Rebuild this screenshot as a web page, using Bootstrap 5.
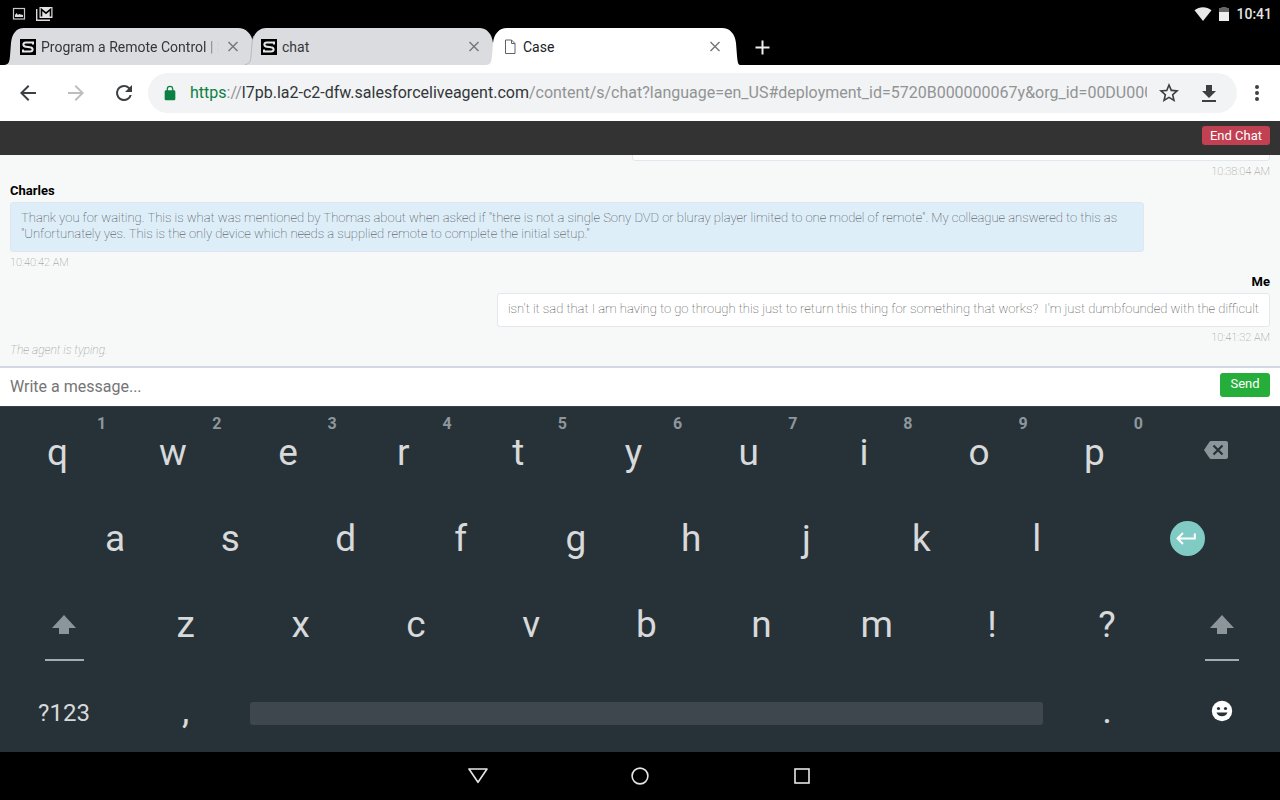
<!DOCTYPE html>
<html lang="en">
<head>
<meta charset="utf-8">
<meta name="viewport" content="width=device-width, initial-scale=1">
<title>Case</title>
<link href="https://cdn.jsdelivr.net/npm/bootstrap@5.3.0/dist/css/bootstrap.min.css" rel="stylesheet">
<style>
body{font-family:Roboto,"Liberation Sans",sans-serif;background:#f7f9f8;height:100vh;min-height:640px}
svg{display:block;flex:none}
button{font-family:inherit}
.plain{background:none;border:0;padding:0;color:inherit}
.status-bar{height:28px;padding:0 8px 0 12px;color:#e4e4e4;font-size:14px;line-height:26px}
.tab-strip{height:37px;padding-left:10px}
.tab-item{width:241px;height:37px;padding:0 12px 0 10px;color:#35363a;font-size:14px;line-height:38px;min-width:0}
.tab-item.active{z-index:1;color:#202124}
.tab-item a{color:inherit}
.tab-shape{position:absolute;left:-6px;top:0;z-index:0}
.tab-body{z-index:1}
.tab-title{margin-left:5px;white-space:nowrap}
.fade-end{-webkit-mask-image:linear-gradient(to right,#000 92%,transparent);mask-image:linear-gradient(to right,#000 92%,transparent)}
.toolbar{height:56px;padding:0 11px 0 16px;color:#3c4043}
.nav-buttons{gap:24px;margin-right:12px}
.address{height:40px;background:#f1f3f4;border-radius:20px;padding:0 16px 0 14px;min-width:0}
.address-text{font-size:16px;color:#919395;margin:0 10px 0 12px}
.address-text .scheme{color:#0b8043}
.address-text .host{color:#333638}
.chat-head{height:34px;background:#333;padding:5px 10px}
.btn-end{height:19px;padding:0 8px;font-size:13px;line-height:17px;color:#fff;background:#c14152;border:0;border-radius:3px}
.chat-log{padding:0 10px 10px;font-size:13px;min-height:0}
.who{font-weight:700;line-height:16px;color:#000}
.bubble{max-width:90%;padding:7px 10px 9px;margin-top:3px;min-height:34px;border:1px solid #e2e8ee;border-radius:3px;background:#fff;line-height:16px;font-weight:100;color:#333;white-space:pre-wrap}
.bubble.agent{background:#deeef9;border-color:#dfe6f1}
.bubble.earlier{width:638px}
.stamp{font-size:11px;line-height:12px;margin:5px 0;font-weight:100;color:#888}
.typing{font-size:12px;line-height:12px;font-weight:100;font-style:italic;color:#888}
.composer{height:40px;border-top:2px solid #d2d7e1;padding:0 10px;background:#fff}
.composer input{font-size:16px;line-height:24px;color:#333;outline:0;min-width:0}
.composer input::placeholder{color:#757575;opacity:1}
.btn-send{height:24px;width:50px;margin-top:5px;padding:0 0 2px;font-size:13px;line-height:20px;color:#fff;background:#26ae3b;border:0;border-radius:3px}
.keyboard{background:#273238;color:#d7d9da;height:346px;border-top:1px solid #35434a}
.key-row{flex:1 1 0;min-height:0}
.cell{flex:0 0 9%;position:relative;display:flex;align-items:center;justify-content:center;font-size:37px;line-height:42px;padding-top:5px}
.cell-wide{flex-basis:10%}
.cell-indent{margin-left:4.5%}
.cell-enter{flex-basis:14.5%}
.cell-delete{padding-top:0}
.cell-fill{flex:1 1 0;min-width:0;padding:10px 7px 0}
.cell-label{font-size:24px;padding-top:8px}
.hint{position:absolute;top:7px;right:9px;font-size:16px;line-height:20px;font-weight:700;color:#8d979c}
.dim{color:#8b959a}
.rule{position:absolute;bottom:5px;height:2px;width:39px;background:#a3acb0}
.rule.short{width:34px}
.space-bar{height:23px;background:#3d474d;border-radius:3px}
.nav-bar{height:48px;gap:142px}
</style>
</head>
<body class="d-flex flex-column overflow-hidden">
<header class="bg-black flex-shrink-0">
  <div class="status-bar d-flex align-items-center justify-content-between">
    <div class="d-flex align-items-center gap-2">
      <svg width="14" height="14" viewBox="0 0 14 14"><rect x="1.5" y="1.5" width="11" height="10.500" fill="none" stroke="#c8c8c8" stroke-width="1.200"/><path d="M3 10V8l1.500-2L6 8l1-1 4 1v2z" fill="#ddd"/></svg>
      <svg width="20" height="16" viewBox="0 0 20 16"><path d="M2.700 3v11.300H16" fill="none" stroke="#ddd" stroke-width="1.400"/><path d="M5.500 1h13v11h-13z" fill="#e4e4e4"/><path d="M7.500 10.500V3.500L12 7.200l4.500-3.700v7" fill="none" stroke="#000" stroke-width="1.600"/></svg>
    </div>
    <div class="d-flex align-items-center">
      <svg width="18" height="16" viewBox="0 0 18 16"><path d="M9 15 .500 4.200C5.500.200 12.500.200 17.500 4.200z" fill="#e8e8e8"/></svg>
      <svg class="ms-1 me-1" width="16" height="16" viewBox="0 0 16 16"><path d="M5.500 1h5v1H13v4H3V2h2.500z" fill="#666"/><path d="M3 6h10v9H3z" fill="#eee"/></svg>
      <span class="fw-medium">10:41</span>
    </div>
  </div>
  <nav class="tab-strip d-flex" aria-label="Tabs">
    <div class="tab-item position-relative flex-shrink-1">
      <svg class="tab-shape" width="254" height="37" viewBox="0 0 254 37"><path d="M0 37C5 37 5.500 33 6 28L7 15C8 6 12 0 20 0H234C242 0 248 6 249 15L250 28C250 33 251 37 254 37z" fill="#dbdce0"/></svg>
      <div class="tab-body position-relative d-flex align-items-center h-100">
        <svg width="16" height="16" viewBox="0 0 16 16"><rect width="16" height="16"/><path d="M13 5.500V3.500H6C2.500 3.500 2.500 7.500 6 7.700l4 .500c3.500.300 3.500 4.300 0 4.300H3v-2" fill="none" stroke="#e8e8e8" stroke-width="2"/></svg>
        <a href="#" class="tab-title fade-end flex-grow-1 overflow-hidden text-decoration-none">Program a Remote Control | Sony</a>
        <button class="plain ms-2" aria-label="Close tab"><svg width="12" height="12" viewBox="0 0 12 12"><path d="m1.500 1 9 9m0-9-9 9" stroke="#77787c" stroke-width="1.500"/></svg></button>
      </div>
    </div>
    <div class="tab-item position-relative flex-shrink-1">
      <svg class="tab-shape" width="254" height="37" viewBox="0 0 254 37"><path d="M0 37C5 37 5.500 33 6 28L7 15C8 6 14 0 21 0H234C242 0 247 6 248 15L249 28C249 33 250 37 254 37z" fill="#dbdce0"/><path d="M0 36.500C5 36 5.500 33 6 28L7 15C7.500 12 8 10 9 8" fill="none" stroke="#b9babd"/></svg>
      <div class="tab-body position-relative d-flex align-items-center h-100">
        <svg width="16" height="16" viewBox="0 0 16 16"><rect width="16" height="16"/><path d="M13 5.500V3.500H6C2.500 3.500 2.500 7.500 6 7.700l4 .500c3.500.300 3.500 4.300 0 4.300H3v-2" fill="none" stroke="#e8e8e8" stroke-width="2"/></svg>
        <a href="#" class="tab-title flex-grow-1 overflow-hidden text-decoration-none">chat</a>
        <button class="plain ms-2" aria-label="Close tab"><svg width="12" height="12" viewBox="0 0 12 12"><path d="m1.500 1 9 9m0-9-9 9" stroke="#77787c" stroke-width="1.500"/></svg></button>
      </div>
    </div>
    <div class="tab-item active position-relative flex-shrink-1">
      <svg class="tab-shape" width="254" height="37" viewBox="0 0 254 37"><path d="M0 37C5 37 5.500 33 6 28L7 15C8 6 13 0 21 0H236C244 0 249 6 250 15L251 28C251.500 33 252 37 254 37z" fill="#fff"/></svg>
      <div class="tab-body position-relative d-flex align-items-center h-100">
        <svg width="16" height="16" viewBox="0 0 16 16"><path d="M3.500 1h6l3.500 3.500V14.500H3.500zM9.500 1v3.500H13" fill="none" stroke="#5f6368"/></svg>
        <a href="#" class="tab-title flex-grow-1 overflow-hidden text-decoration-none">Case</a>
        <button class="plain ms-2" aria-label="Close tab"><svg width="12" height="12" viewBox="0 0 12 12"><path d="m1.500 1 9 9m0-9-9 9" stroke="#77787c" stroke-width="1.500"/></svg></button>
      </div>
    </div>
    <button class="plain ms-3 ps-1" aria-label="New tab"><svg width="18" height="18" viewBox="0 0 18 18"><path d="M9.500 2.500v14M2.500 9.500h14" stroke="#eee" stroke-width="2"/></svg></button>
  </nav>
</header>

<div class="toolbar d-flex align-items-center bg-white flex-shrink-0">
  <div class="nav-buttons d-flex">
    <button class="plain" aria-label="Back"><svg width="24" height="24" viewBox="0 0 24 24"><path fill="#3c4043" d="M20 11H7.830l5.590-5.590L12 4l-8 8 8 8 1.410-1.410L7.830 13H20z"/></svg></button>
    <button class="plain" aria-label="Forward"><svg width="24" height="24" viewBox="0 0 24 24"><path fill="#bdbebf" d="m12 4-1.410 1.410L16.170 11H4v2h12.170l-5.580 5.590L12 20l8-8z"/></svg></button>
    <button class="plain" aria-label="Reload"><svg width="24" height="24" viewBox="0 0 24 24"><path fill="#3c4043" d="M17.650 6.350A7.960 7.960 0 0 0 12 4a8 8 0 1 0 7.730 10h-2.080A6 6 0 1 1 12 6c1.660 0 3.140.690 4.220 1.780L13 11h7V4z"/></svg></button>
  </div>
  <div class="address d-flex align-items-center flex-grow-1">
    <svg width="16" height="16" viewBox="0 0 24 24"><path fill="#0b8043" d="M18 8h-1V6A5 5 0 0 0 7 6v2H6a2 2 0 0 0-2 2v11a2 2 0 0 0 2 2h12a2 2 0 0 0 2-2V10a2 2 0 0 0-2-2zM8.900 8V6a3.100 3.100 0 0 1 6.200 0v2z"/></svg>
    <div class="address-text flex-grow-1 overflow-hidden text-nowrap" role="textbox" aria-label="Address" tabindex="0"><span class="scheme">https</span>://<span class="host">l7pb.la2-c2-dfw.salesforceliveagent.com</span>/content/s/chat?language=en_US#deployment_id=5720B000000067y&amp;org_id=00DU000</div>
    <button class="plain me-3" aria-label="Bookmark"><svg width="24" height="24" viewBox="0 0 24 24"><path fill="#3c4043" d="m22 9.240-7.190-.620L12 2 9.190 8.630 2 9.240l5.460 4.730L5.820 21 12 17.270 18.180 21l-1.630-7.030zM12 15.400l-3.760 2.270 1-4.280-3.320-2.880 4.380-.380L12 6.100l1.710 4.040 4.380.380-3.320 2.880 1 4.280z"/></svg></button>
    <button class="plain" aria-label="Download"><svg width="24" height="24" viewBox="0 0 24 24"><path fill="#3c4043" d="M19 10h-4V4H9v6H5l7 7zM5 19v2h14v-2z"/></svg></button>
  </div>
  <button class="plain ms-2" aria-label="Menu"><svg width="24" height="24" viewBox="0 0 24 24"><path fill="#3c4043" d="M12 8a2 2 0 1 0 0-4 2 2 0 0 0 0 4m0 2a2 2 0 1 0 0 4 2 2 0 0 0 0-4m0 6a2 2 0 1 0 0 4 2 2 0 0 0 0-4"/></svg></button>
</div>

<div class="chat-head d-flex justify-content-end align-items-start flex-shrink-0"><button class="btn-end">End Chat</button></div>

<main class="chat-log d-flex flex-column justify-content-end flex-grow-1 overflow-hidden">
  <div class="d-flex flex-column align-items-end flex-shrink-0">
    <div class="bubble earlier"></div>
    <div class="stamp">10:38:04 AM</div>
  </div>
  <div class="d-flex flex-column align-items-start flex-shrink-0">
    <div class="who">Charles</div>
    <div class="bubble agent">Thank you for waiting. This is what was mentioned by Thomas about when asked if "there is not a single Sony DVD or bluray player limited to one model of remote". My colleague answered to this as "Unfortunately yes. This is the only device which needs a supplied remote to complete the initial setup."</div>
    <div class="stamp">10:40:42 AM</div>
  </div>
  <div class="d-flex flex-column align-items-end flex-shrink-0">
    <div class="who">Me</div>
    <div class="bubble">isn't it sad that I am having to go through this just to return this thing for something that works?  I'm just dumbfounded with the difficult</div>
    <div class="stamp mb-0">10:41:32 AM</div>
  </div>
  <div class="typing flex-shrink-0">The agent is typing.</div>
</main>

<form class="composer d-flex align-items-start flex-shrink-0" onsubmit="return false">
  <input aria-label="Message" class="flex-grow-1 border-0 bg-transparent p-0 align-self-center" type="text" placeholder="Write a message...">
  <button class="btn-send">Send</button>
</form>

<section class="keyboard d-flex flex-column flex-shrink-0" aria-label="Keyboard">
  <div class="key-row d-flex">
    <button class="plain cell">q<span class="hint">1</span></button>
    <button class="plain cell">w<span class="hint">2</span></button>
    <button class="plain cell">e<span class="hint">3</span></button>
    <button class="plain cell">r<span class="hint">4</span></button>
    <button class="plain cell">t<span class="hint">5</span></button>
    <button class="plain cell">y<span class="hint">6</span></button>
    <button class="plain cell">u<span class="hint">7</span></button>
    <button class="plain cell">i<span class="hint">8</span></button>
    <button class="plain cell">o<span class="hint">9</span></button>
    <button class="plain cell">p<span class="hint">0</span></button>
    <button class="plain cell cell-wide cell-delete dim" aria-label="Backspace"><svg width="24" height="24" viewBox="0 0 24 24"><path fill="currentColor" d="M22 3H7c-.690 0-1.230.350-1.590.880L0 12l5.410 8.110c.360.530.900.890 1.590.890h15c1.100 0 2-.900 2-2V5c0-1.100-.900-2-2-2"/><path d="m9.500 7.500 9 9m0-9-9 9" stroke="#273238" stroke-width="2.200"/></svg></button>
  </div>
  <div class="key-row d-flex">
    <button class="plain cell cell-indent">a</button>
    <button class="plain cell">s</button>
    <button class="plain cell">d</button>
    <button class="plain cell">f</button>
    <button class="plain cell">g</button>
    <button class="plain cell">h</button>
    <button class="plain cell">j</button>
    <button class="plain cell">k</button>
    <button class="plain cell">l</button>
    <button class="plain cell cell-enter" aria-label="Enter"><svg width="36" height="36" viewBox="0 0 36 36"><circle cx="18.500" cy="17.500" r="17.500" fill="#80cbc4"/><path d="M25.800 12.500v5H9M14 12l-5.500 5.500L14 23" fill="none" stroke="#fff" stroke-width="2"/></svg></button>
  </div>
  <div class="key-row d-flex">
    <button class="plain cell cell-wide dim" aria-label="Shift"><svg width="24" height="20" viewBox="0 0 24 20"><path fill="currentColor" d="M12 0 24 13h-7v6H7v-6H0z"/></svg><span class="rule"></span></button>
    <button class="plain cell">z</button>
    <button class="plain cell">x</button>
    <button class="plain cell">c</button>
    <button class="plain cell">v</button>
    <button class="plain cell">b</button>
    <button class="plain cell">n</button>
    <button class="plain cell">m</button>
    <button class="plain cell">!</button>
    <button class="plain cell">?</button>
    <button class="plain cell dim" aria-label="Shift"><svg width="24" height="20" viewBox="0 0 24 20"><path fill="currentColor" d="M12 0 24 13h-7v6H7v-6H0z"/></svg><span class="rule short"></span></button>
  </div>
  <div class="key-row d-flex">
    <button class="plain cell cell-wide cell-label">?123</button>
    <button class="plain cell">,</button>
    <button class="plain cell cell-fill" aria-label="Space"><span class="space-bar w-100"></span></button>
    <button class="plain cell">.</button>
    <button class="plain cell" aria-label="Emoji"><svg width="22" height="22" viewBox="0 0 22 22"><circle cx="11" cy="11" r="10.200" fill="#fff"/><circle cx="7.500" cy="8.500" r="1.600" fill="#273238"/><circle cx="14.500" cy="8.500" r="1.600" fill="#273238"/><path d="M5.500 12.500h11a5.700 5 0 0 1-11 0z" fill="#273238"/></svg></button>
  </div>
</section>

<footer class="nav-bar bg-black d-flex align-items-center justify-content-center flex-shrink-0">
  <button class="plain" aria-label="Back"><svg width="20" height="20" viewBox="0 0 20 20"><path d="M1 3h18l-9 13.300z" fill="none" stroke="#e6e6e6" stroke-width="1.600" stroke-linejoin="round"/></svg></button>
  <button class="plain" aria-label="Home"><svg width="20" height="20" viewBox="0 0 20 20"><circle cx="10" cy="10" r="7.900" fill="none" stroke="#e6e6e6" stroke-width="1.600"/></svg></button>
  <button class="plain" aria-label="Recent apps"><svg width="20" height="20" viewBox="0 0 20 20"><rect x="3" y="3" width="14" height="14" fill="none" stroke="#e6e6e6" stroke-width="1.600"/></svg></button>
</footer>
<script src="https://cdn.jsdelivr.net/npm/bootstrap@5.3.0/dist/js/bootstrap.bundle.min.js"></script>
</body>
</html>
